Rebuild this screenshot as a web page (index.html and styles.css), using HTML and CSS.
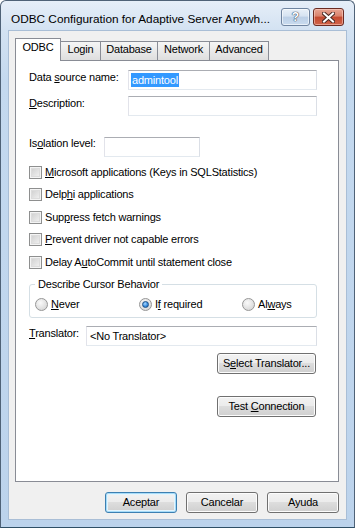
FILE: index.html
```html
<!DOCTYPE html>
<html lang="en">
<head>
    <meta charset="UTF-8">
    <meta name="viewport" content="width=device-width, initial-scale=1.0">
    <title>ODBC Configuration</title>
    <link rel="stylesheet" href="styles.css">
</head>
<body>

    <div class="window">
        <!-- Barra de título -->
        <div class="titlebar">
            <span class="title">ODBC Configuration for Adaptive Server Anywh...</span>
            <span class="cap-btn help">?</span>
            <span class="cap-btn close">
                <svg width="13" height="11" viewBox="0 0 13 11">
                    <path d="M2 1.5 L11 9.5 M11 1.5 L2 9.5" stroke="#4a2a24" stroke-width="4" stroke-linecap="square"/>
                    <path d="M2 1.5 L11 9.5 M11 1.5 L2 9.5" stroke="#ffffff" stroke-width="2" stroke-linecap="square"/>
                </svg>
            </span>
        </div>

        <div class="client">
            <!-- Abas -->
            <div class="tabs">
                <span class="tab active">ODBC</span>
                <span class="tab tab-login">Login</span>
                <span class="tab tab-database">Database</span>
                <span class="tab tab-network">Network</span>
                <span class="tab tab-advanced">Advanced</span>
            </div>

            <div class="panel">
                <div class="field-row first">
                    <span class="label dsn-label">Data <u>s</u>ource name:</span>
                    <div class="textbox"><span class="sel">admintool</span></div>
                </div>
                <div class="field-row desc">
                    <span class="label dsn-label"><u>D</u>escription:</span>
                    <div class="textbox"></div>
                </div>
                <div class="field-row isolation">
                    <span class="label iso-label">Is<u>o</u>lation level:</span>
                    <div class="textbox iso-box"></div>
                </div>

                <div class="check-row c1"><span class="check"></span><span><u>M</u>icrosoft applications (Keys in SQLStatistics)</span></div>
                <div class="check-row c2"><span class="check"></span><span>Delp<u>h</u>i applications</span></div>
                <div class="check-row c3"><span class="check"></span><span>Sup<u>p</u>ress fetch warnings</span></div>
                <div class="check-row c4"><span class="check"></span><span><u>P</u>revent driver not capable errors</span></div>
                <div class="check-row c5"><span class="check"></span><span>Delay A<u>u</u>toCommit until statement close</span></div>

                <fieldset class="group">
                    <legend>Describe Cursor Behavior</legend>
                    <div class="radios">
                        <div class="radio-opt"><span class="radio"></span><span><u>N</u>ever</span></div>
                        <div class="radio-opt"><span class="radio checked"></span><span>I<u>f</u> required</span></div>
                        <div class="radio-opt"><span class="radio"></span><span>Al<u>w</u>ays</span></div>
                    </div>
                </fieldset>

                <div class="field-row translator">
                    <span class="label tr-label"><u>T</u>ranslator:</span>
                    <div class="textbox tr-box">&lt;No Translator&gt;</div>
                </div>

                <div class="btn-row select-row">
                    <span class="button wide"><span>S<u>e</u>lect Translator...</span></span>
                </div>
                <div class="btn-row test-row">
                    <span class="button wide"><span>Test <u>C</u>onnection</span></span>
                </div>
            </div>

            <!-- Botões do diálogo -->
            <div class="dialog-buttons">
                <span class="button default">Aceptar</span>
                <span class="button">Cancelar</span>
                <span class="button">Ayuda</span>
            </div>
        </div>
    </div>

</body>
</html>
```

FILE: styles.css
```css
body {
    margin: 0;
    padding: 0;
    background-color: #ffffff;
    font-family: "Liberation Sans", Arial, sans-serif;
    font-size: 11px;
    color: #000;
}
.window {
    width: 355px;
    height: 528px;
    box-sizing: border-box;
    border: 1px solid #4f6277;
    border-bottom-color: #2f4f66;
    border-radius: 6px 6px 0 0;
    padding: 0 7px 7px 7px;
    background: linear-gradient(to bottom, #e6eef8 0px, #d3e2f2 29px, #c4d9ef 80px, #bcd3ec 100%);
}
.titlebar {
    height: 29px;
    display: flex;
    align-items: flex-start;
    padding: 0 3px 0 3px;
}
.title {
    flex: 1;
    padding-top: 11px;
    line-height: 15px;
    font-size: 11.8px;
    white-space: nowrap;
}
.cap-btn {
    margin-top: 7px;
    height: 18px;
    box-sizing: border-box;
    border: 1px solid #6f84a0;
    border-radius: 3px;
    display: flex;
    align-items: center;
    justify-content: center;
}
.help {
    width: 29px;
    margin-right: 3px;
    background: linear-gradient(to bottom, #e9f0f8 0%, #d6e3f1 45%, #bccfe6 50%, #c9dbef 100%);
    box-shadow: inset 0 0 0 1px rgba(255, 255, 255, 0.6);
    color: #fff;
    font-weight: bold;
    font-size: 12px;
    text-shadow: 0 0 1px #3a4c63, 0 0 1px #3a4c63, 0 0 1px #3a4c63;
}
.close {
    width: 31px;
    border-color: #6b2b22;
    background: linear-gradient(to bottom, #e8a593 0%, #d9826c 45%, #c44a30 50%, #d0644a 100%);
    box-shadow: inset 0 0 0 1px rgba(255, 220, 210, 0.5);
}
.client {
    height: 490px;
    box-sizing: border-box;
    border: 1px solid #a9bed6;
    background-color: #f0f0f0;
    padding: 7px 7px 6px 6px;
    letter-spacing: -0.2px;
}
.tabs {
    display: flex;
    align-items: flex-end;
    height: 22px;
}
.tab {
    height: 19px;
    box-sizing: border-box;
    border: 1px solid #898c95;
    border-bottom: none;
    margin-left: -1px;
    background: linear-gradient(to bottom, #f5f5f5, #dedede);
    text-align: center;
    line-height: 15px;
}
.tab.active {
    width: 46px;
    height: 23px;
    margin-left: 0;
    margin-bottom: -1px;
    padding-top: 1px;
    background: #ffffff;
    position: relative;
    z-index: 1;
}
.tab-login { width: 41px; }
.tab-database { width: 58px; }
.tab-network { width: 53px; }
.tab-advanced { width: 60px; }
.panel {
    height: 422px;
    box-sizing: border-box;
    border: 1px solid #898c95;
    background-color: #ffffff;
    padding: 0 21px 0 13px;
}
.field-row {
    display: flex;
    align-items: flex-start;
    height: 20px;
}
.field-row.first { margin-top: 9px; }
.field-row.desc { margin-top: 6px; }
.field-row.isolation { margin-top: 21px; }
.field-row.translator { margin-top: 8px; }
.label {
    line-height: 15px;
    white-space: nowrap;
}
.dsn-label { width: 99px; }
.iso-label { width: 75px; margin-top: -1px; }
.tr-label { width: 57px; }
.textbox {
    flex: 1;
    height: 20px;
    box-sizing: border-box;
    border: 1px solid;
    border-color: #abadb3 #dbdfe6 #e3e9ef #e2e3ea;
    background: #fff;
    padding: 2px 0 0 2px;
    line-height: 14px;
    white-space: nowrap;
}
.iso-box {
    flex: none;
    width: 96px;
}
.tr-box { padding-left: 3px; }
.sel {
    display: inline-block;
    background-color: #3399ff;
    color: #fff;
    padding: 0 1px;
}
.check-row {
    display: flex;
    align-items: center;
    gap: 3px;
    height: 13px;
    line-height: 13px;
}
.c1 { margin-top: 9px; }
.c2 { margin-top: 9px; }
.c3 { margin-top: 10px; }
.c4 { margin-top: 9px; }
.c5 { margin-top: 10px; }
.check {
    width: 13px;
    height: 13px;
    box-sizing: border-box;
    border: 1px solid #8e8f8f;
    background: linear-gradient(135deg, #cbcbcb, #f6f6f6);
    box-shadow: inset 0 0 0 1px #f4f4f4, inset 0 0 0 2px #dcdcdc;
}
.group {
    margin: 8px 0 0 0;
    padding: 6px 0 6px 5px;
    border: 1px solid #d5dfe5;
    border-radius: 3px;
    min-width: 0;
}
.group legend {
    padding: 0 3px;
    line-height: 15px;
}
.radios {
    display: grid;
    grid-template-columns: 104px 103px 1fr;
    height: 13px;
}
.radio-opt {
    display: flex;
    align-items: center;
    gap: 3px;
    line-height: 13px;
}
.radio {
    width: 13px;
    height: 13px;
    box-sizing: border-box;
    border: 1px solid #969696;
    border-radius: 50%;
    background: radial-gradient(circle at 40% 35%, #fafafa 0%, #e4e4e4 50%, #cfcfcf 100%);
    display: flex;
    align-items: center;
    justify-content: center;
}
.radio.checked::after {
    content: "";
    width: 5px;
    height: 5px;
    border-radius: 50%;
    border: 1px solid #1b4f86;
    background: radial-gradient(circle at 40% 35%, #a9d8ff 0%, #3a8ee0 55%, #1a5fae 100%);
}
.btn-row {
    display: flex;
    justify-content: flex-end;
}
.select-row { margin-top: 7px; }
.test-row { margin-top: 22px; }
.button {
    width: 72px;
    height: 21px;
    box-sizing: border-box;
    border: 1px solid #707070;
    border-radius: 3px;
    background: linear-gradient(to bottom, #f2f2f2 0%, #ebebeb 50%, #dddddd 50%, #cfcfcf 100%);
    box-shadow: inset 0 0 0 1px #fcfcfc;
    display: flex;
    align-items: center;
    justify-content: center;
    line-height: 15px;
}
.button.wide {
    width: 99px;
    margin-right: 1px;
}
.button.default {
    border-color: #3c7fb1;
    box-shadow: inset 0 0 0 1px #a6dcf9, inset 0 0 0 2px #e4f4fc;
}
.dialog-buttons {
    display: flex;
    justify-content: flex-end;
    gap: 9px;
    margin-top: 10px;
}
```
